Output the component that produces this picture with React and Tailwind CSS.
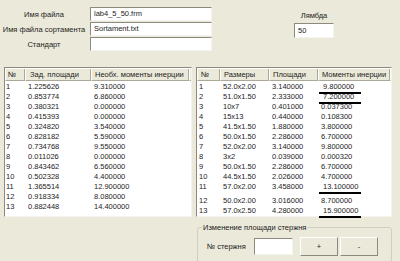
const left = [
  ['1', '1.225626', '9.310000'],
  ['2', '0.853774', '6.860000'],
  ['3', '0.380321', '0.000000'],
  ['4', '0.415393', '0.000000'],
  ['5', '0.324820', '3.540000'],
  ['6', '0.828182', '5.590000'],
  ['7', '0.734768', '9.550000'],
  ['8', '0.011026', '0.000000'],
  ['9', '0.843462', '6.560000'],
  ['10', '0.502328', '4.400000'],
  ['11', '1.365514', '12.900000'],
  ['12', '0.918334', '8.080000'],
  ['13', '0.882448', '14.400000'],
];

const right = [
  ['1', '52.0x2.00', '3.140000', '9.800000', true],
  ['2', '51.0x1.50', '2.333000', '7.200000', true],
  ['3', '10x7', '0.401000', '0.037300'],
  ['4', '15x13', '0.440000', '0.108300'],
  ['5', '41.5x1.50', '1.880000', '3.800000'],
  ['6', '50.0x1.50', '2.286000', '6.700000'],
  ['7', '52.0x2.00', '3.140000', '9.800000'],
  ['8', '3x2', '0.039000', '0.000320'],
  ['9', '50.0x1.50', '2.286000', '6.700000'],
  ['10', '44.5x1.50', '2.026000', '4.700000'],
  ['11', '57.0x2.00', '3.458000', '13.100000', true],
  ['12', '50.0x2.00', '3.016000', '8.700000'],
  ['13', '57.0x2.50', '4.280000', '15.900000', true],
];

function Field({ value, className = '' }) {
  return (
    <div
      className={`bg-white border border-t-[#8c8a7e] border-l-[#8c8a7e] border-b-[#f4f3ee] border-r-[#f4f3ee] flex items-center pl-[3px] ${className}`}
    >
      {value}
    </div>
  );
}

function Head({ children, className = '' }) {
  return (
    <div
      className={`h-[12px] flex items-center pl-[2px] border-l border-l-white border-r border-r-[#aca899] border-b border-b-[#aca899] ${className}`}
    >
      {children}
    </div>
  );
}

export default function App() {
  return (
    <div className="w-[400px] h-[261px] overflow-hidden bg-[#ebe9d9] text-[7.5px] leading-none text-[#1c1c1c] font-['Liberation_Sans',Arial,sans-serif]">
      {/* top fields */}
      <div className="flex pt-[7px] h-[67px]">
        <div className="w-[88px] flex flex-col">
          <div className="h-[15px] flex items-center justify-center">Имя файла</div>
          <div className="h-[15px] flex items-center justify-center">Имя файла сортамента</div>
          <div className="h-[15px] flex items-center justify-center">Стандарт</div>
        </div>
        <div className="ml-[2px] w-[122px] flex flex-col gap-[1px]">
          <Field value="lab4_5_50.frm" className="h-[14px]" />
          <Field value="Sortament.txt" className="h-[14px]" />
          <Field value="" className="h-[14px]" />
        </div>
        <div className="ml-[82px] w-[40px] flex flex-col items-center">
          <div className="mt-[5px] h-[8px]">Лямбда</div>
          <Field value="50" className="mt-[3px] w-[40px] h-[15px]" />
        </div>
      </div>

      {/* tables */}
      <div className="flex h-[150px] pl-[4px] gap-[4px]">
        <div className="w-[188px] bg-white border border-t-[#8c8a7e] border-l-[#8c8a7e] border-b-[#f4f3ee] border-r-[#f4f3ee] pt-[1px]">
          <div className="flex bg-[#ebe9d9]">
            <Head className="w-[20px]">№</Head>
            <Head className="w-[66px] pl-[4px]">Зад. площади</Head>
            <Head className="w-[98px] pl-[3px]">Необх. моменты инерции</Head>
            <div className="flex-1 h-[12px] border-b border-b-[#aca899] border-l border-l-white" />
          </div>
          <div className="pt-[1px]">
            {left.map((r) => (
              <div key={r[0]} className="flex h-[10px] items-center">
                <div className="w-[20px] pl-[1px]">{r[0]}</div>
                <div className="w-[66px] pl-[3px]">{r[1]}</div>
                <div className="w-[98px] pl-[3px]">{r[2]}</div>
              </div>
            ))}
          </div>
        </div>

        <div className="w-[196px] bg-white border border-t-[#8c8a7e] border-l-[#8c8a7e] border-b-[#f4f3ee] border-r-[#f4f3ee] pt-[1px]">
          <div className="flex bg-[#ebe9d9]">
            <Head className="w-[23px] pl-[3px]">№</Head>
            <Head className="w-[49px] pl-[3px]">Размеры</Head>
            <Head className="w-[49px] pl-[3px]">Площади</Head>
            <Head className="w-[72px] pl-[3px]">Моменты инерции</Head>
            <div className="flex-1 h-[12px] border-b border-b-[#aca899] border-l border-l-white" />
          </div>
          <div className="pt-[1px]">
            {right.map((r) => (
              <div
                key={r[0]}
                className={`flex items-start ${r[0] === '11' ? 'h-[14px]' : 'h-[10px]'}`}
              >
                <div className="w-[23px] pl-[2px] leading-[10px]">{r[0]}</div>
                <div className="w-[49px] pl-[3px] leading-[10px]">{r[1]}</div>
                <div className="w-[49px] pl-[3px] leading-[10px]">{r[2]}</div>
                <div className="w-[72px] relative leading-[10px]">
                  <span className={r[4] ? 'pl-[5px]' : 'pl-[3px]'}>{r[3]}</span>
                  {r[4] && (
                    <div className="absolute left-[1px] top-[10px] w-[42px] h-[2px] bg-black" />
                  )}
                </div>
              </div>
            ))}
          </div>
        </div>
      </div>

      {/* group box */}
      <div className="ml-[197px] mt-[10px] w-[195px] h-[40px] border border-[#d0cebf] rounded-[3px] relative">
        <div className="absolute left-[4px] top-[-5px] bg-[#ebe9d9] px-[1px] h-[9px] flex items-center">
          Изменение площади стержня
        </div>
        <div className="flex items-center mt-[9px] pl-[9px]">
          <div className="w-[47px]">№ стержня</div>
          <Field value="" className="w-[39px] h-[17px]" />
          <button className="ml-[7px] w-[38px] h-[19px] bg-[#ebe9d9] border border-t-white border-l-white border-b-[#8c8a7e] border-r-[#8c8a7e] flex items-center justify-center">
            +
          </button>
          <button className="ml-[2px] w-[38px] h-[19px] bg-[#ebe9d9] border border-t-white border-l-white border-b-[#8c8a7e] border-r-[#8c8a7e] flex items-center justify-center">
            -
          </button>
        </div>
      </div>
    </div>
  );
}
